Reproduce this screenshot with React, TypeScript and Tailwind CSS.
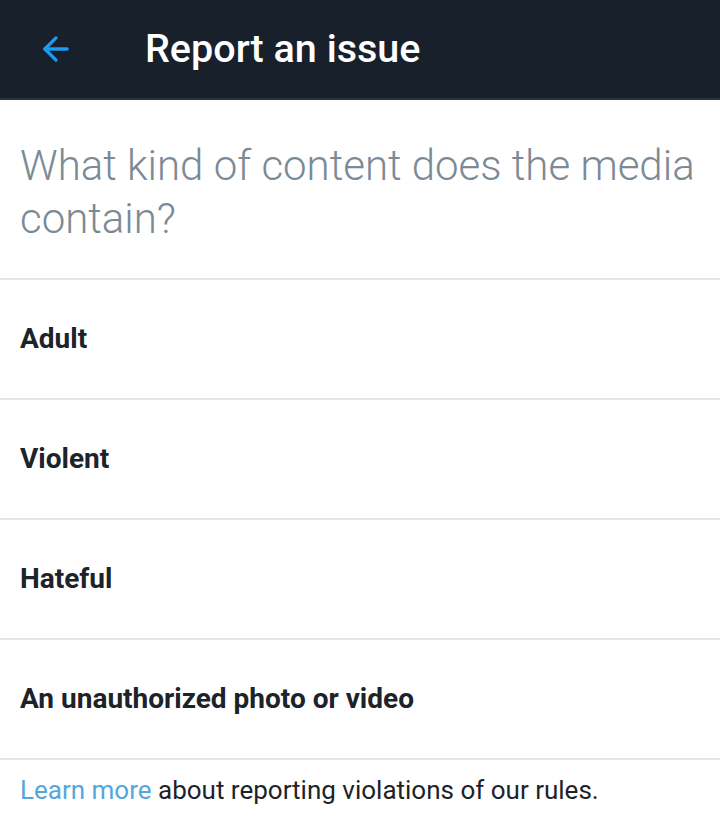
import { ArrowLeft } from "lucide-react";

const options = ["Adult", "Violent", "Hateful", "An unauthorized photo or video"];

export default function App() {
  return (
    <div className="w-[720px] h-[833px] bg-white overflow-hidden" style={{ fontFamily: "Roboto, 'Noto Sans', sans-serif" }}>
      <header className="h-[100px] bg-[#17202b] border-b-2 border-[#2b3540] flex items-center">
        <div className="w-[145px] pl-[37px] flex items-center">
          <ArrowLeft className="w-[38px] h-[38px] text-[#1d9bf0]" strokeWidth={2.1} />
        </div>
        <h1 className="text-white text-[39.5px] font-medium">Report an issue</h1>
      </header>
      <div className="h-[180px] px-5 pt-[39px] border-b-2 border-[#e1e8ed]">
        <p className="text-[42px] font-light leading-[53px] text-[#7b8a95]">What kind of content does the media contain?</p>
      </div>
      {options.map((o) => (
        <div key={o} className="h-[120px] px-5 flex items-center border-b-2 border-[#e1e8ed]">
          <span className="text-[28px] font-bold text-[#1c2329]">{o}</span>
        </div>
      ))}
      <p className="px-5 pt-[11px] text-[26px] text-[#1c2329]">
        <span className="text-[#55a6dd]">Learn more</span> about reporting violations of our rules.
      </p>
    </div>
  );
}
